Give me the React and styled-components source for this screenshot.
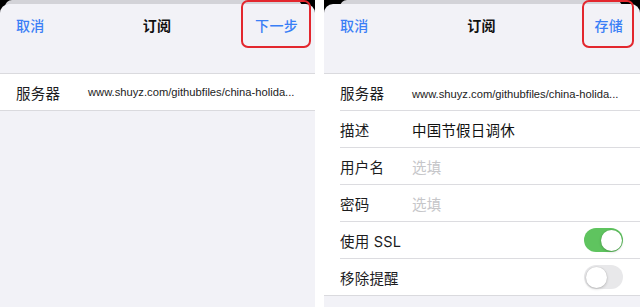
import React from "react";
import styled, { createGlobalStyle } from "styled-components";

const Global = createGlobalStyle`
  html, body { margin: 0; padding: 0; background: #ffffff; }
  body { font-family: "Inter", "Noto Sans CJK SC", sans-serif; -webkit-font-smoothing: antialiased; }
`;

const Page = styled.div`
  display: flex;
  gap: 9px;
  width: 640px;
  height: 307px;
  overflow: hidden;
  background: #ffffff;
`;

const Panel = styled.div`
  width: ${(p) => p.$w}px;
  flex: none;
  display: flex;
  flex-direction: column;
  background: #000;
  overflow: hidden;
`;

const Backdrop = styled.div`
  height: 10px;
  margin: 0 ${(p) => p.$r}px 0 ${(p) => p.$l}px;
  background: #d3d3d8;
  border-radius: 7px 7px 0 0;
  flex: none;
`;

const Sheet = styled.div`
  margin-top: -6px;
  flex: 1;
  background: #f2f2f7;
  border-radius: 9px 9px 0 0;
  display: flex;
  flex-direction: column;
`;

const NavBar = styled.div`
  height: 42px;
  display: grid;
  grid-template-columns: 1fr auto 1fr;
  align-items: center;
  padding: 0 17px 0 16px;
  font-size: 14px;
  margin-bottom: 27px;
`;

const NavLink = styled.span`
  color: #3a7ff6;
  justify-self: ${(p) => (p.$end ? "end" : "start")};
  position: relative;
  letter-spacing: 0.3px;
  font-weight: 500;
`;

const Highlight = styled.span`
  position: absolute;
  top: -15px;
  bottom: -13px;
  left: -${(p) => p.$l}px;
  right: -${(p) => p.$r}px;
  border: 2px solid #e3272e;
  border-radius: 7px;
  pointer-events: none;
`;

const Title = styled.span`
  font-weight: 600;
  color: #111;
  letter-spacing: 0.3px;
`;

const Section = styled.div`
  background: #fff;
  border-top: 1px solid #dadade;
  border-bottom: 1px solid #dadade;
`;

const Row = styled.div`
  padding-left: 16px;
  &:last-child > div { border-bottom: none; }
`;

const RowInner = styled.div`
  height: 36px;
  display: flex;
  align-items: center;
  padding-right: 17px;
  border-bottom: 1px solid #dcdce0;
`;

const Label = styled.span`
  width: ${(p) => p.$w}px;
  flex: none;
  font-size: 14.5px;
  color: #1c1c1e;
  letter-spacing: 0.2px;
  white-space: nowrap;
`;

const Value = styled.span`
  font-size: 14.5px;
  color: ${(p) => (p.$placeholder ? "#c6c6c9" : "#111")};
  letter-spacing: 0.2px;
  white-space: nowrap;
`;

const Url = styled.span`
  font-family: "Liberation Sans", "Noto Sans CJK SC", sans-serif;
  font-size: 11.2px;
  color: #222;
  white-space: nowrap;
  margin-top: ${(p) => p.$drop || 0}px;
`;

const Switch = styled.span`
  margin-left: auto;
  width: 39px;
  height: 24px;
  border-radius: 12px;
  background: ${(p) => (p.$on ? "#5fc45f" : "#e8e8ea")};
  display: flex;
  align-items: center;
  justify-content: ${(p) => (p.$on ? "flex-end" : "flex-start")};
  padding: 0 1.5px;
  box-sizing: border-box;
  flex: none;
`;

const Knob = styled.span`
  width: 21px;
  height: 21px;
  border-radius: 50%;
  background: #fff;
  box-shadow: 0 1px 3px rgba(0, 0, 0, 0.2), 0 0 0 0.5px rgba(0, 0, 0, 0.06);
`;

const url = "www.shuyz.com/githubfiles/china-holida...";

export default function App() {
  return (
    <>
      <Global />
      <Page>
        <Panel $w={315}>
          <Backdrop $l={5} $r={13} />
          <Sheet>
            <NavBar>
              <NavLink>取消</NavLink>
              <Title>订阅</Title>
              <NavLink $end>
                下一步
                <Highlight $l={14} $r={13} />
              </NavLink>
            </NavBar>
            <Section>
              <Row>
                <RowInner>
                  <Label $w={72}>服务器</Label>
                  <Url>{url}</Url>
                </RowInner>
              </Row>
            </Section>
          </Sheet>
        </Panel>
        <Panel $w={316}>
          <Backdrop $l={16} $r={18} />
          <Sheet>
            <NavBar>
              <NavLink>取消</NavLink>
              <Title>订阅</Title>
              <NavLink $end>
                存储
                <Highlight $l={12} $r={11} />
              </NavLink>
            </NavBar>
            <Section>
              <Row>
                <RowInner>
                  <Label $w={72}>服务器</Label>
                  <Url $drop={4}>{url}</Url>
                </RowInner>
              </Row>
              <Row>
                <RowInner>
                  <Label $w={72}>描述</Label>
                  <Value>中国节假日调休</Value>
                </RowInner>
              </Row>
              <Row>
                <RowInner>
                  <Label $w={72}>用户名</Label>
                  <Value $placeholder>选填</Value>
                </RowInner>
              </Row>
              <Row>
                <RowInner>
                  <Label $w={72}>密码</Label>
                  <Value $placeholder>选填</Value>
                </RowInner>
              </Row>
              <Row>
                <RowInner>
                  <Label $w={120}>使用 SSL</Label>
                  <Switch $on>
                    <Knob />
                  </Switch>
                </RowInner>
              </Row>
              <Row>
                <RowInner>
                  <Label $w={120}>移除提醒</Label>
                  <Switch>
                    <Knob />
                  </Switch>
                </RowInner>
              </Row>
            </Section>
          </Sheet>
        </Panel>
      </Page>
    </>
  );
}
